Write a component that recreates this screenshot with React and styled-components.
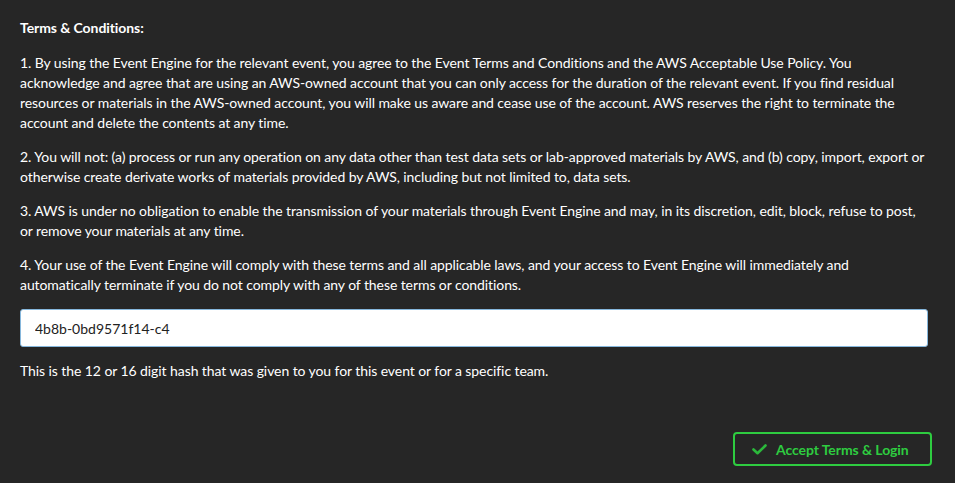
import { useState } from 'react';
import styled, { createGlobalStyle } from 'styled-components';

const terms = [
  "1. By using the Event Engine for the relevant event, you agree to the Event Terms and Conditions and the AWS Acceptable Use Policy. You acknowledge and agree that are using an AWS-owned account that you can only access for the duration of the relevant event. If you find residual resources or materials in the AWS-owned account, you will make us aware and cease use of the account. AWS reserves the right to terminate the account and delete the contents at any time.",
  "2. You will not: (a) process or run any operation on any data other than test data sets or lab-approved materials by AWS, and (b) copy, import, export or otherwise create derivate works of materials provided by AWS, including but not limited to, data sets.",
  "3. AWS is under no obligation to enable the transmission of your materials through Event Engine and may, in its discretion, edit, block, refuse to post, or remove your materials at any time.",
  "4. Your use of the Event Engine will comply with these terms and all applicable laws, and your access to Event Engine will immediately and automatically terminate if you do not comply with any of these terms or conditions."
];

export default function App() {
  const [hash, setHash] = useState('4b8b-0bd9571f14-c4');

  return (
    <>
      <GlobalStyle />
      <Page>
        <Title>Terms &amp; Conditions:</Title>
        {terms.map((t, i) => (
          <Paragraph key={i}>{t}</Paragraph>
        ))}
        <HashInput
          type="text"
          value={hash}
          onChange={(e) => setHash(e.target.value)}
        />
        <Hint>This is the 12 or 16 digit hash that was given to you for this event or for a specific team.</Hint>
        <Footer>
          <AcceptButton>
            <svg width="15" height="11" viewBox="0 0 15 11" fill="none">
              <path d="M1.5 5.5 L5.5 9.2 L13.5 1.5" stroke="#2bb83b" strokeWidth="2.6" strokeLinecap="round" strokeLinejoin="round" />
            </svg>
            Accept Terms &amp; Login
          </AcceptButton>
        </Footer>
      </Page>
    </>
  );
}

const GlobalStyle = createGlobalStyle`
  html, body {
    margin: 0;
    background: #262626;
  }
  body {
    font-family: Lato, "Open Sans", sans-serif;
    font-size: 14px;
    line-height: 20px;
    letter-spacing: -0.08px;
    color: #ffffff;
  }
`;

const Page = styled.div`
  padding: 18px 27px 18px 20px;
  min-height: 483px;
  box-sizing: border-box;
`;

const Title = styled.div`
  font-weight: bold;
  margin-bottom: 15px;
`;

const Paragraph = styled.p`
  margin: 0 0 14px 0;
`;

const HashInput = styled.input`
  display: block;
  box-sizing: border-box;
  width: 100%;
  height: 38px;
  margin: 0;
  padding: 0 14px;
  font-family: Lato, "Open Sans", sans-serif;
  font-size: 14px;
  color: #222;
  background: #fff;
  border: 1px solid #86b7dc;
  border-radius: 3px;
  outline: none;
`;

const Hint = styled.p`
  margin: 14px 0 0 0;
`;

const Footer = styled.div`
  display: flex;
  justify-content: flex-end;
  margin-right: -4px;
  margin-top: 51px;
`;

const AcceptButton = styled.button`
  display: flex;
  align-items: center;
  justify-content: flex-start;
  gap: 9px;
  box-sizing: border-box;
  width: 199px;
  height: 34px;
  padding: 0 0 0 17px;
  background: transparent;
  border: 2px solid #2ecc40;
  border-radius: 4px;
  color: #2ecc40;
  font-family: Lato, "Open Sans", sans-serif;
  font-size: 14px;
  font-weight: bold;
  letter-spacing: -0.08px;
  cursor: pointer;
`;
